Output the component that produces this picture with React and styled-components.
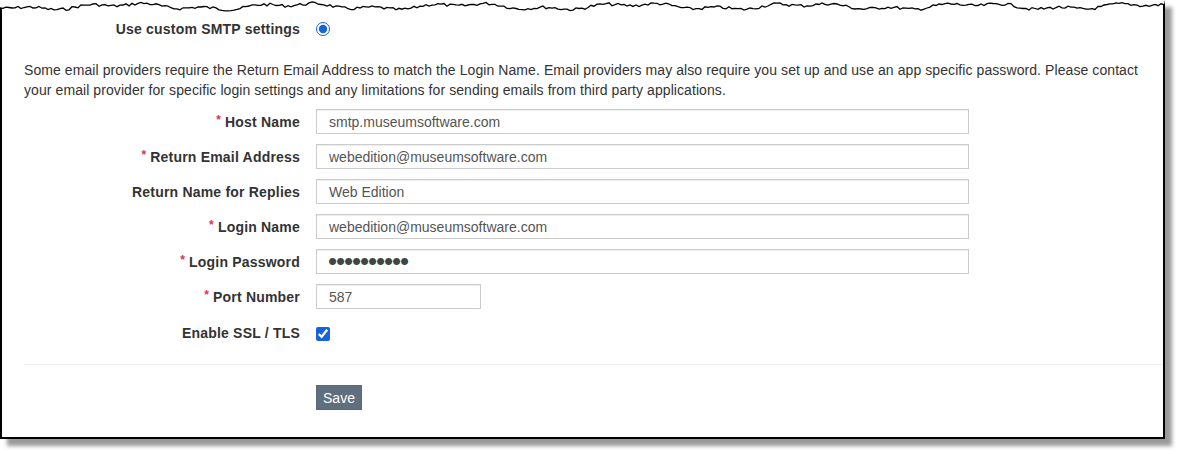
import React from "react";
import styled, { createGlobalStyle } from "styled-components";

const Global = createGlobalStyle`
  html, body { margin: 0; padding: 0; background: #fff; }
  body { font-family: "Liberation Sans", Arial, sans-serif; color: #333; }
`;

const Page = styled.div`
  width: 1180px;
  height: 454px;
  overflow: hidden;
  background: #fff;
`;

const Card = styled.div`
  position: relative;
  box-sizing: border-box;
  width: 1165px;
  height: 439px;
  background: #fff;
  border-left: 2px solid #000;
  border-right: 2px solid #000;
  border-bottom: 2px solid #000;
  box-shadow: 7px 7px 4px rgba(0, 0, 0, 0.4);
  padding: 16px 0 0 22px;
`;

const TornEdge = styled.svg`
  position: absolute;
  top: 0;
  left: -2px;
  width: 1165px;
  height: 14px;
  overflow: visible;
`;

const Row = styled.div`
  display: flex;
  align-items: center;
  gap: 16px;
  height: ${(p) => p.$h || 25}px;
  margin-top: ${(p) => p.$mt || 0}px;
`;

const Label = styled.label`
  width: 276px;
  text-align: right;
  font-weight: bold;
  font-size: 14px;
  letter-spacing: 0.2px;
  color: #333;
  white-space: nowrap;
`;

const Star = styled.span`
  color: #d9344f;
  font-size: 12px;
  position: relative;
  top: -3px;
  margin-right: 4px;
  font-weight: bold;
`;

const Intro = styled.p`
  margin: 19px 0 9px 0;
  padding-right: 20px;
  font-size: 14px;
  line-height: 20px;
  letter-spacing: 0.08px;
  color: #333;
`;

const Form = styled.div`
  display: flex;
  flex-direction: column;
  gap: 10px;
`;

const Input = styled.input`
  box-sizing: border-box;
  width: ${(p) => p.$w || 653}px;
  height: 25px;
  border: 1px solid #ccc;
  border-radius: 0;
  box-shadow: inset 0 1px 1px rgba(0, 0, 0, 0.075);
  padding: 0 12px;
  font-family: "Liberation Sans", Arial, sans-serif;
  font-size: 14px;
  color: #555;
  background: #fff;
  outline: none;
  &[type="password"] {
    font-size: 26px;
    letter-spacing: -1.1px;
    padding-left: 11px;
    color: #444;
  }
`;

const Radio = styled.input`
  width: 14px;
  height: 14px;
  margin: 0;
  accent-color: #1565d8;
`;

const Check = styled.input`
  width: 14px;
  height: 14px;
  margin: 1px 0 0 0;
  accent-color: #1565d8;
`;

const Divider = styled.hr`
  border: 0;
  border-top: 1px solid #eee;
  margin: 17px 0 0 0;
  height: 0;
`;

const Actions = styled.div`
  margin-top: 20px;
  padding-left: 292px;
`;

const SaveButton = styled.button`
  box-sizing: border-box;
  height: 25px;
  width: 46px;
  padding: 0;
  border: 1px solid #5a6a7b;
  border-radius: 0;
  background: #5f6f80;
  color: #fff;
  font-family: "Liberation Sans", Arial, sans-serif;
  font-size: 14px;
`;

function tornPath() {
  let seed = 7;
  const rnd = () => {
    seed = (seed * 9301 + 49297) % 233280;
    return seed / 233280;
  };
  const pts = [];
  for (let x = 0; x <= 1165; x += 3) {
    const y =
      6.5 +
      2.2 * Math.sin(x / 27) +
      1.4 * Math.sin(x / 9.1 + 1.3) +
      (rnd() - 0.5) * 3;
    pts.push(`${x},${Math.max(1, Math.min(12, y)).toFixed(1)}`);
  }
  return "M" + pts.join(" L");
}

const fields = [
  { label: "Host Name", req: true, value: "smtp.museumsoftware.com" },
  { label: "Return Email Address", req: true, value: "webedition@museumsoftware.com" },
  { label: "Return Name for Replies", req: false, value: "Web Edition" },
  { label: "Login Name", req: true, value: "webedition@museumsoftware.com" },
  { label: "Login Password", req: true, value: "secretpass", type: "password" },
  { label: "Port Number", req: true, value: "587", w: 165 },
];

export default function App() {
  const d = tornPath();
  return (
    <Page>
      <Global />
      <Card>
        <TornEdge viewBox="0 0 1165 14">
          <path d={d + " L1165,0 L0,0 Z"} fill="#fff" stroke="none" />
          <path d={d} fill="none" stroke="#000" strokeWidth="1.3" />
        </TornEdge>
        <Row>
          <Label>Use custom SMTP settings</Label>
          <Radio type="radio" defaultChecked readOnly />
        </Row>
        <Intro>
          Some email providers require the Return Email Address to match the Login Name. Email
          providers may also require you set up and use an app specific password. Please contact
          your email provider for specific login settings and any limitations for sending emails
          from third party applications.
        </Intro>
        <Form>
          {fields.map((f) => (
            <Row key={f.label}>
              <Label>
                {f.req && <Star>*</Star>}
                {f.label}
              </Label>
              <Input type={f.type || "text"} defaultValue={f.value} $w={f.w} readOnly />
            </Row>
          ))}
          <Row $h={28}>
            <Label>Enable SSL / TLS</Label>
            <Check type="checkbox" defaultChecked readOnly />
          </Row>
        </Form>
        <Divider />
        <Actions>
          <SaveButton type="button">Save</SaveButton>
        </Actions>
      </Card>
    </Page>
  );
}
